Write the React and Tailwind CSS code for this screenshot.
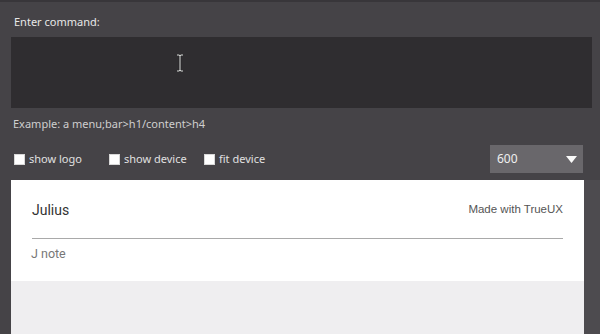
import React from 'react';

function Check({ label, className }) {
  return (
    <label className={`flex items-center gap-[4px] ${className}`}>
      <span className="w-[11px] h-[11px] bg-white border border-[#d8d8d8]" />
      <span className="text-[11px] text-[#e0e0e0]">{label}</span>
    </label>
  );
}

export default function App() {
  return (
    <div className="w-[600px] h-[334px] overflow-hidden bg-[#454347] flex flex-col font-['Noto_Sans','Open_Sans',sans-serif]">
      <div className="h-[2px] bg-[#38363a]" />

      {/* Command input */}
      <div className="px-[14px] pt-[13px] text-[11px] leading-[14px] text-[#e8e8e8]">Enter command:</div>
      <div className="relative ml-[11px] mt-[8px] w-[581px] h-[71px] bg-[#2f2d30]">
        <svg className="absolute left-[164px] top-[17px]" width="10" height="18" viewBox="0 0 10 18">
          <path d="M2 1h2.5l0.5 1 0.5-1H8M5 2v14M2 17h2.5l0.5-1 0.5 1H8" stroke="#111" strokeWidth="2.2" fill="none" />
          <path d="M2 1h2.5l0.5 1 0.5-1H8M5 2v14M2 17h2.5l0.5-1 0.5 1H8" stroke="#f4f4f4" strokeWidth="1" fill="none" />
        </svg>
      </div>
      <div className="px-[13px] pt-[9px] text-[11px] leading-[14px] text-[#cfcfcf]">Example: a menu;bar&gt;h1/content&gt;h4</div>

      {/* Options row */}
      <div className="flex items-center h-[28px] mt-[14px] pl-[14px] pr-[17px]">
        <Check label="show logo" className="w-[95px]" />
        <Check label="show device" className="w-[95px]" />
        <Check label="fit device" className="" />
        <div className="ml-auto w-[93px] h-[28px] bg-[#69676b] flex items-center justify-between pl-[7px] pr-[6px]">
          <span className="text-[12px] text-[#f0f0f0]">600</span>
          <svg width="11" height="7" viewBox="0 0 11 7"><path d="M0 0h11L5.5 7z" fill="#fafafa" /></svg>
        </div>
      </div>

      {/* Preview */}
      <div className="flex flex-1 mt-[7px]">
        <div className="ml-[11px] w-[573px] flex flex-col bg-[#efeef0] font-['Roboto',sans-serif]">
          <div className="bg-white h-[101px] px-[21px] flex flex-col">
            <div className="flex items-center justify-between h-[59px] border-b border-[#a9a9a9] pt-[2px]">
              <span className="text-[14px] text-[#333]">Julius</span>
              <span className="text-[11.5px] text-[#555] font-['Liberation_Sans',sans-serif]">Made with TrueUX</span>
            </div>
            <div className="pt-[6px] text-[12.5px] text-[#777] -ml-[1px]">J note</div>
          </div>
        </div>
        <div className="flex-1 bg-[#4d4b4f]" />
      </div>
    </div>
  );
}
